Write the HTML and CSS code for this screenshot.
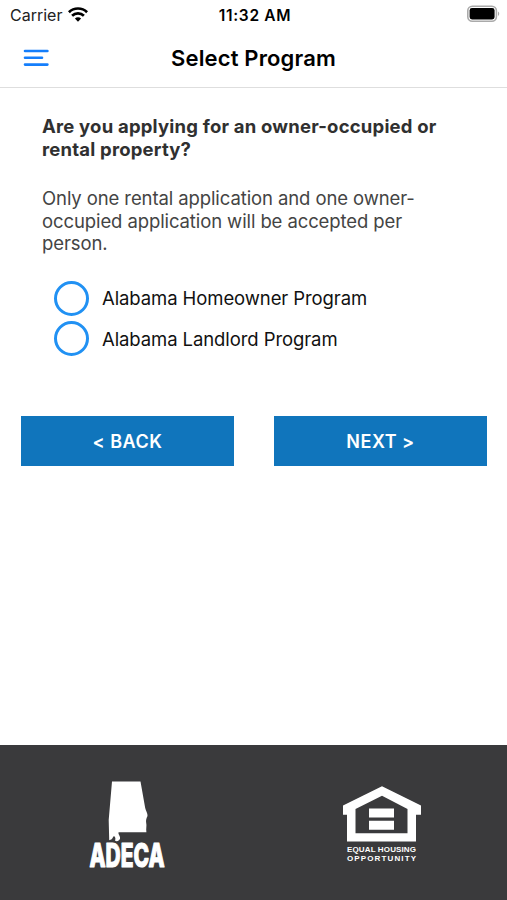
FILE: index.html
```html
<!DOCTYPE html>
<html lang="en">
<head>
<meta charset="utf-8">
<meta name="viewport" content="width=device-width, initial-scale=1">
<title>Select Program</title>
<link rel="stylesheet" href="styles.css">
</head>
<body>
<div class="status">
  <div class="carrier"><span>Carrier</span>
    <svg width="20" height="15" viewBox="0 0 20 15" fill="none" stroke="#000" stroke-width="2.7"><path d="M.9 5.200a13 13 0 0 1 18.200 0"/><path d="M4.100 8.700a8.500 8.500 0 0 1 11.800 0"/><path d="M6.900 11.600a4.400 4.400 0 0 1 6.200 0L10 14.700z" fill="#000" stroke="none"/></svg>
  </div>
  <time class="clock">11:32 AM</time>
  <svg class="battery" width="34" height="18" viewBox="0 0 34 18"><rect x="1.800" y="1.200" width="28.600" height="15" rx="4.500" fill="#fff" stroke="#aaa" stroke-width="1.600"/><rect x="3.600" y="3" width="25" height="11.400" rx="2.400"/><path d="M32 6.500c1.700.7 1.700 3.700 0 4.400z" fill="#aaa"/></svg>
</div>
<header class="navbar">
  <button class="menu" aria-label="Menu"><svg width="26" height="18" viewBox="0 0 26 18" stroke="#147efb" stroke-width="2.600" stroke-linecap="round"><path d="M2 2h22.400M2 8.800h17M2 15.600h22.400"/></svg></button>
  <h1>Select Program</h1>
</header>
<main>
  <h2>Are you applying for an owner-occupied or<br>rental property?</h2>
  <p class="note">Only one rental application and one owner-<br>occupied application will be accepted per<br>person.</p>
  <div class="options">
    <label class="option"><input type="radio" name="program"><span>Alabama Homeowner Program</span></label>
    <label class="option"><input type="radio" name="program"><span>Alabama Landlord Program</span></label>
  </div>
  <div class="actions"><button>&lt; BACK</button><button>NEXT &gt;</button></div>
</main>
<footer>
  <svg class="adeca" width="86" height="104" viewBox="-4 0 86 104" fill="#fff"><path d="M24 1.500h28.500l4.700 26.500c.5 3 2.600 5 2.300 8-1 2-1.800 4-1.300 7 .7 2.500-.4 5.500.2 9.200H30.600c-.8 2 2 4 1.400 6.500-.8 2.300-3.500 3.300-5 1.800.8-1.500.5-3.500-1-4.500-1.500 1-1 3.500-4.800 4.200L20.700 40z"/><text class="wordmark" x="1.500" y="87" textLength="75" lengthAdjust="spacingAndGlyphs">ADECA</text></svg>
  <svg class="housing" width="80" height="78" viewBox="0 0 80 78" fill="#fff"><path fill-rule="evenodd" d="M40 .3 79 19.500V28.800H74V55.500H5V28.800H1V19.500zM40 9.800 13.500 23V47.200H65.500V23z"/><path d="M27 22.500h25v9H27zM27 34.700h25v9H27z"/><text class="caption" x="5" y="66" textLength="69">EQUAL HOUSING</text><text class="caption" x="5" y="74.700" textLength="69">OPPORTUNITY</text></svg>
</footer>
</body>
</html>
```

FILE: styles.css
```css
* { box-sizing: border-box; }
body {
  margin: 0;
  height: 900px;
  display: flex;
  flex-direction: column;
  overflow: hidden;
  background: #fff;
  color: #000;
  font-family: Inter, "Liberation Sans", sans-serif;
}
button { border: 0; padding: 0; font-family: inherit; }
svg { display: block; flex: none; }
.status {
  height: 30px;
  padding: 0 7px 0 10px;
  display: grid;
  grid-template-columns: 1fr auto 1fr;
  align-items: center;
  font-size: 16px;
}
.carrier { display: flex; align-items: center; gap: 6px; color: #222; }
.carrier svg { margin-top: -1px; }
.clock { font-weight: 600; font-size: 15.500px; letter-spacing: .7px; }
.battery { justify-self: end; margin-top: -2px; }
.navbar {
  height: 58px;
  border-bottom: 1px solid #dedede;
  padding: 0 23px 2px;
  display: grid;
  grid-template-columns: 1fr auto 1fr;
  align-items: center;
}
.menu { width: 26px; background: none; }
h1 { margin: 0; font-size: 22px; font-weight: 600; letter-spacing: .15px; }
main { flex: 1; padding: 27px 20px 0 21px; }
h2, .note { margin: 0 21px; font-size: 18.500px; line-height: 22.700px; white-space: nowrap; }
h2 { color: #303030; font-weight: 700; letter-spacing: .2px; }
.note { color: #444; margin-top: 26.500px; letter-spacing: -.1px; }
.options { margin: 23px 0 0 33px; }
.option { height: 40.500px; display: flex; align-items: center; gap: 13px; font-size: 18.500px; letter-spacing: -.09px; color: #111; }
.option input { appearance: none; width: 35px; height: 35px; margin: 0; border: 3px solid #2191f3; border-radius: 50%; }
.actions { display: grid; grid-template-columns: 1fr 1fr; gap: 40px; margin-top: 56.500px; }
.actions button { height: 50px; padding-top: 2px; background: #1075bc; color: #fff; font-size: 18px; font-weight: 600; letter-spacing: .5px; font-feature-settings: "calt" 0; }
footer {
  height: 155px;
  background: #3a3a3c;
  display: grid;
  grid-template-columns: 1fr 1fr;
  justify-items: center;
  padding: 35px 1px 0;
}
.housing { margin: 6px 0 0 5px; }
.wordmark { font: 800 32px/1 Inter, sans-serif; stroke: #fff; stroke-width: 1.200px; stroke-linejoin: round; }
.caption { font: 700 8px "Liberation Sans", sans-serif; }
```
